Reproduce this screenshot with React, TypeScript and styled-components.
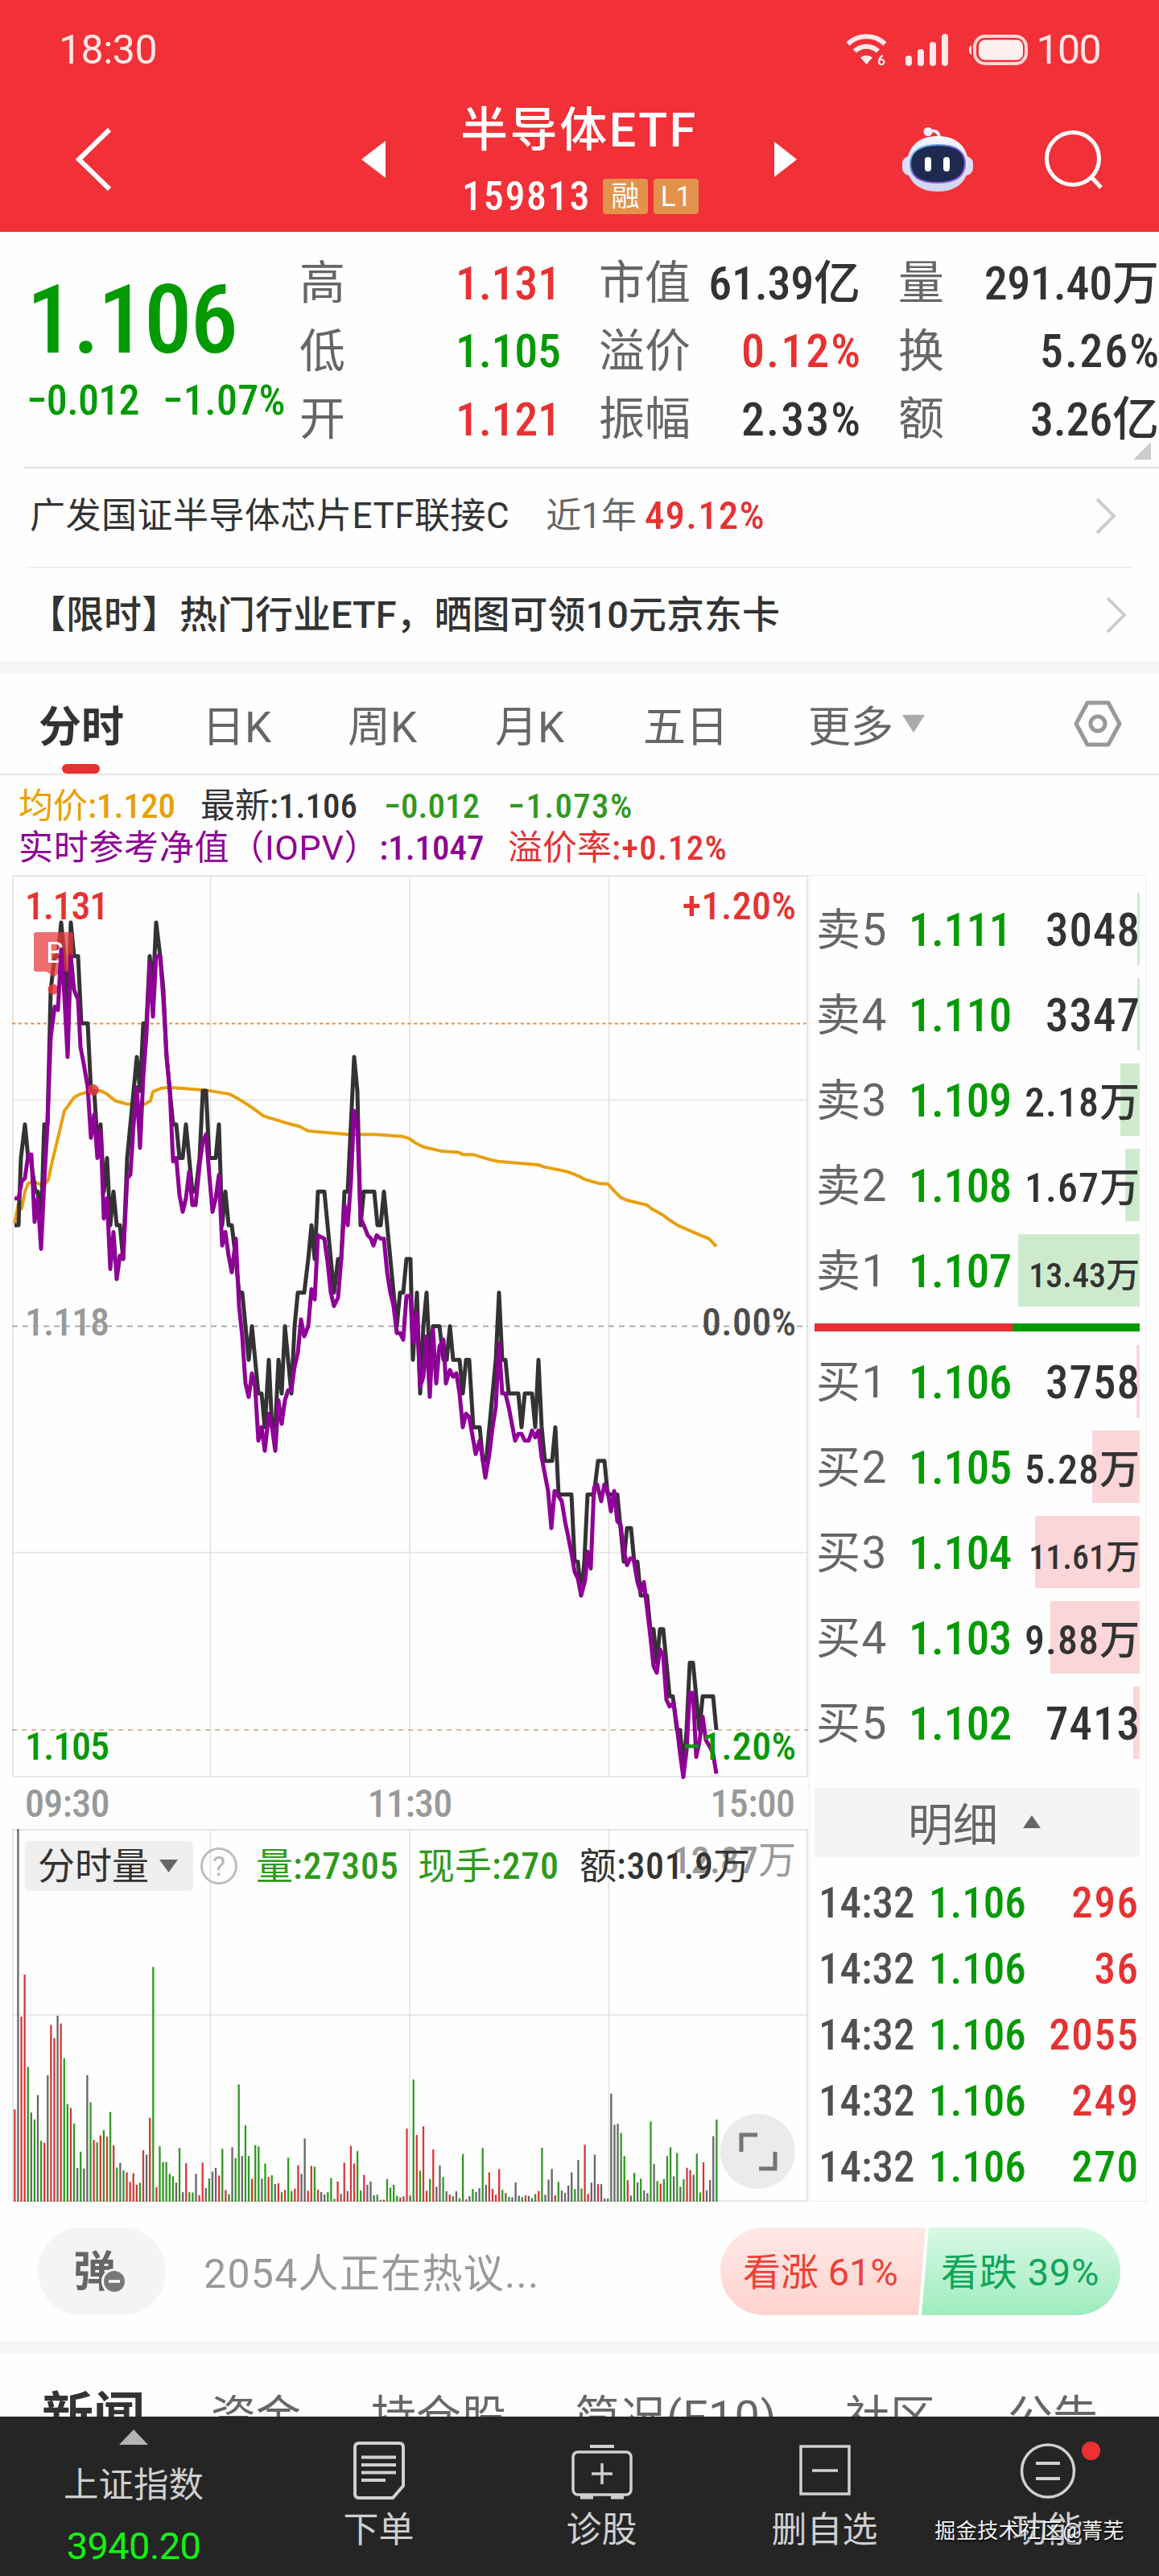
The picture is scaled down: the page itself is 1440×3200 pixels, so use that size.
import React from 'react';
import styled, { createGlobalStyle, css } from 'styled-components';

const RED = '#e63232';
const GREEN = '#039a03';
const INK = '#333333';
const MUTED = '#666666';
const LINE = '#e6e6e6';

const GlobalStyle = createGlobalStyle`
  * { box-sizing: border-box; }
  body {
    margin: 0;
    background: #ffffff;
    font-family: Roboto, "Noto Sans CJK SC", sans-serif;
    color: ${INK};
  }
`;

const Page = styled.main`
  width: 1440px;
  height: 3200px;
  overflow: hidden;
  background: #fefefe;
  display: flex;
  flex-direction: column;
`;

/* Condensed numerals used for every price and volume */
const Num = styled.span<{ $size: number; $color?: string; $track?: number }>`
  font-size: ${p => p.$size}px;
  font-weight: 500;
  font-stretch: 75%;
  color: ${p => p.$color ?? 'inherit'};
  letter-spacing: ${p => p.$track ?? 0}px;
  margin-right: ${p => -(p.$track ?? 0)}px;
  white-space: nowrap;
`;

/* ---------- header ---------- */
const Header = styled.header`
  flex: none;
  height: 288px;
  background: #f13037;
  color: #fff;
`;
const StatusBar = styled.div`
  height: 124px;
  padding: 0 73px 0 73px;
  display: flex;
  align-items: center;
  justify-content: space-between;
  font-size: 50px;
  letter-spacing: -0.5px;
  color: #ffe9e9;
`;
const StatusIcons = styled.div`
  display: flex;
  align-items: center;
  svg { display: block; }
`;
const StatusLevel = styled.span`
  margin-left: 9px;
  font-size: 50px;
  letter-spacing: -1.6px;
`;
const NavBar = styled.nav`
  height: 148px;
  display: flex;
  align-items: center;
  padding-left: 93px;
  svg { display: block; flex: none; }
`;
const Gap = styled.div<{ $w: number }>`
  flex: none;
  width: ${p => p.$w}px;
`;
const TitleBlock = styled.div`
  width: 296px;
  height: 148px;
  display: flex;
  flex-direction: column;
  flex: none;
`;
const Title = styled.h1`
  margin: 2px 0 0 -2px;
  font-size: 59px;
  font-weight: 500;
  line-height: 72px;
  letter-spacing: 2.6px;
  white-space: nowrap;
`;
const CodeRow = styled.div`
  margin-top: 24px;
  height: 44px;
  display: flex;
  align-items: center;
  gap: 7px;
`;
const CodeNum = styled.div`
  width: 168px;
  flex: none;
  display: flex;
`;
const Tag = styled.span`
  width: 56px;
  height: 44px;
  flex: none;
  border-radius: 4px;
  background: #e3924b;
  font-size: 35px;
  line-height: 45px;
  text-align: center;
`;

/* ---------- quote ---------- */
const Quote = styled.section`
  position: relative;
  flex: none;
  height: 294px;
  display: flex;
  &::after {
    content: '';
    position: absolute;
    left: 29px;
    right: 0;
    bottom: 0;
    height: 2px;
    background: #dedede;
  }
`;
const LastBlock = styled.div`
  width: 372px;
  flex: none;
  padding: 49px 0 0 33px;
`;
const LastPrice = styled.div`
  display: flex;
  line-height: 122px;
  height: 120px;
`;
const ChangeRow = styled.div`
  margin-top: 16px;
  line-height: 50px;
  display: grid;
  grid-template-columns: 169px auto;
`;
const StatColumn = styled.dl`
  margin: 22px 47px 0 0;
  width: 325px;
  flex: none;
  display: grid;
  grid-template-rows: repeat(3, 84.5px);
  &:last-of-type { margin-right: 0; width: 324px; }
`;
const Stat = styled.div`
  display: flex;
  align-items: center;
  justify-content: space-between;
  dt { font-size: 57px; color: ${MUTED}; line-height: 84px; font-weight: 400; }
  dd { display: flex; margin: 0; line-height: 85px; }
`;
const Corner = styled.i`
  position: absolute;
  right: 10px;
  bottom: 11px;
  border: 11px solid transparent;
  border-right-color: #cccccc;
  border-bottom-color: #cccccc;
`;

const FundRow = styled.section`
  flex: none;
  height: 124px;
  margin: 0 32px;
  padding: 0 21px 4px 5px;
  display: flex;
  align-items: center;
  border-bottom: 2px solid #efefef;
  font-size: 44px;
  letter-spacing: 0.5px;
  line-height: 60px;
  color: ${INK};
  white-space: nowrap;
`;
const FundPeriod = styled.span`
  margin: 0 10px 0 45px;
  letter-spacing: 0;
  color: ${MUTED};
`;
const RowArrow = styled.svg`
  display: block;
  margin-left: auto;
`;
const PromoRow = styled.section`
  flex: none;
  height: 116px;
  padding: 0 40px 0 35px;
  display: flex;
  align-items: center;
  font-size: 47px;
  line-height: 60px;
  font-weight: 500;
  white-space: nowrap;
`;
const Band = styled.div<{ $h: number }>`
  flex: none;
  height: ${p => p.$h}px;
  background: #f5f5f5;
`;

/* ---------- chart tabs ---------- */
const ChartTabs = styled.nav`
  flex: none;
  height: 126px;
  padding-left: 48px;
  border-bottom: 2px solid ${LINE};
  display: grid;
  grid-template-columns: 203px 181px 183px 184px 205px 330px 60px;
  align-items: center;
  svg { display: block; }
`;
const ChartTab = styled.div<{ $active?: boolean }>`
  position: relative;
  display: flex;
  align-items: center;
  gap: 11px;
  height: 124px;
  font-size: 53px;
  color: ${MUTED};
  white-space: nowrap;
  ${p => p.$active && css`
    color: ${INK};
    font-weight: 700;
    &::after {
      content: '';
      position: absolute;
      left: 29px;
      bottom: 0;
      width: 47px;
      height: 12px;
      border-radius: 6px;
      background: #e83030;
    }
  `}
`;

const InfoGrid = styled.section`
  flex: none;
  height: 124px;
  padding: 12px 0 0 23px;
  display: grid;
  grid-template-columns: 226px 228px 154px auto;
  grid-template-rows: 52px 52px;
  line-height: 52px;
`;
const InfoCell = styled.div<{ $span?: number; $color: string }>`
  grid-column: span ${p => p.$span ?? 1};
  color: ${p => p.$color};
  font-size: 43px;
  white-space: nowrap;
`;
const Iopv = styled.span`
  letter-spacing: 0.7px;
`;

/* ---------- market panels ---------- */
const Market = styled.section`
  flex: none;
  height: 1648px;
  padding-left: 15px;
  display: flex;
`;
const ChartColumn = styled.div`
  width: 990px;
  flex: none;
`;
const PriceChart = styled.div`
  position: relative;
  height: 1121px;
  svg { display: block; overflow: visible; }
`;
const ChartLabel = styled(Num)<{ $top: number; $side: 'left' | 'right' }>`
  position: absolute;
  top: ${p => p.$top}px;
  ${p => p.$side}: 16px;
  line-height: 50px;
`;
const TimeAxis = styled.div`
  height: 64px;
  padding: 2px 17px 0 16px;
  display: flex;
  align-items: center;
  justify-content: space-between;
  line-height: 62px;
`;
const VolumeChart = styled.div`
  position: relative;
  height: 463px;
  > svg { display: block; }
`;
const VolumeBar = styled.div`
  position: absolute;
  left: 16px;
  top: 14px;
  height: 64px;
  display: flex;
  align-items: center;
  white-space: nowrap;
  line-height: 66px;
  svg { display: block; }
`;
const VolumePicker = styled.div`
  width: 209px;
  height: 62px;
  padding-left: 16px;
  border-radius: 6px;
  background: #efefef;
  display: flex;
  align-items: center;
  gap: 13px;
  font-size: 46px;
  line-height: 64px;
`;
const HelpDot = styled.span`
  width: 46px;
  height: 46px;
  margin: 0 23px 0 9px;
  border: 3px solid #bdbdbd;
  border-radius: 50%;
  font-size: 34px;
  line-height: 41px;
  text-align: center;
  color: #b5b5b5;
`;
const VolumeStat = styled.span<{ $w: number; $color: string }>`
  width: ${p => p.$w}px;
  font-size: 46px;
  color: ${p => p.$color};
`;
const VolumeMax = styled.div`
  position: absolute;
  right: 16px;
  top: 11px;
  line-height: 56px;
  font-size: 47px;
  color: #999;
`;
const ExpandButton = styled.button`
  position: absolute;
  left: 880px;
  top: 354px;
  width: 93px;
  height: 93px;
  padding: 0;
  border: 0;
  border-radius: 50%;
  background: #ebebeb;
  display: grid;
  place-items: center;
`;

const BookPanel = styled.aside`
  width: 419px;
  height: 1648px;
  border: 1px solid #ebebeb;
  padding: 21px 7px 0 6px;
`;
const Levels = styled.div`
  display: grid;
  gap: 16px;
`;
const Level = styled.div`
  position: relative;
  height: 90px;
  display: grid;
  grid-template-columns: 115px 130px 1fr;
  grid-template-rows: 90px;
  align-items: start;
  padding: 0 0 0 2px;
  line-height: 94px;
  white-space: nowrap;
`;
const DepthBar = styled.i<{ $side: 'sell' | 'buy' }>`
  position: absolute;
  right: 0;
  top: 0;
  height: 90px;
  background: ${p => (p.$side === 'sell' ? '#cdeacd' : '#fbd5d7')};
`;
const LevelName = styled.span`
  position: relative;
  font-size: 55px;
  line-height: 92px;
  letter-spacing: 1.5px;
  color: ${MUTED};
  font-weight: 400;
`;
const LevelPrice = styled.span`
  position: relative;
  display: flex;
`;
const LevelSize = styled.span<{ $drop: number }>`
  position: relative;
  display: flex;
  justify-self: end;
  padding-top: ${p => p.$drop}px;
`;
const Balance = styled.div`
  height: 10px;
  margin: 21px 0 17px;
  background: linear-gradient(90deg, #e83034 61%, ${GREEN} 61%);
`;
const DetailHead = styled.div`
  height: 86px;
  margin: 36px 0 16px;
  background: #f4f4f4;
  display: flex;
  align-items: center;
  justify-content: center;
  gap: 31px;
  padding: 0 7px 3px 0;
  font-size: 56px;
  color: ${MUTED};
`;
const Tick = styled.div`
  height: 82px;
  display: grid;
  grid-template-columns: 137px 120px 1fr;
  padding: 0 2px 0 5px;
  line-height: 83px;
  > :last-child { justify-self: end; }
`;

/* ---------- discussion ---------- */
const Discuss = styled.section`
  flex: none;
  height: 173px;
  padding: 0 48px 0 47px;
  display: flex;
  align-items: center;
`;
const DanmuPill = styled.div`
  width: 159px;
  height: 109px;
  border-radius: 55px;
  background: #f4f4f4;
  display: flex;
  align-items: center;
  justify-content: center;
  padding: 0 18px 8px 0;
  font-size: 53px;
  font-weight: 700;
  color: ${MUTED};
  position: relative;
  svg { position: absolute; left: 79px; top: 51px; }
`;
const TalkCount = styled.div`
  margin: 0 0 3px 47px;
  font-size: 50px;
  letter-spacing: 1.3px;
  color: #999999;
`;
const Votes = styled.div`
  margin-left: auto;
  width: 497px;
  height: 109px;
  display: flex;
  border-radius: 55px;
  overflow: hidden;
  font-size: 47px;
  line-height: 111px;
  white-space: nowrap;
`;
const VoteUp = styled.div`
  width: 255px;
  padding-left: 28px;
  color: #ee4036;
  background: linear-gradient(#fee9e7, #ffd3ce);
  clip-path: polygon(0 0, 100% 0, 246px 100%, 0 100%);
`;
const VoteDown = styled.div`
  width: 250px;
  margin-left: -8px;
  padding-left: 27px;
  letter-spacing: 0.7px;
  color: #10a658;
  background: linear-gradient(#d8f9e6, #9eecbd);
  clip-path: polygon(12px 0, 100% 0, 100% 100%, 3px 100%);
`;

const NewsTabs = styled.nav`
  flex: none;
  height: 78px;
  overflow: hidden;
  padding-left: 52px;
  display: grid;
  grid-template-columns: 210px 199px 253px 336px 202px auto;
  font-size: 56px;
  line-height: 158px;
  color: ${MUTED};
  white-space: nowrap;
`;
const NewsTab = styled.span<{ $active?: boolean; $track?: number }>`
  letter-spacing: ${p => p.$track ?? 0}px;
  ${p => p.$active && css`
    font-size: 64px;
    font-weight: 700;
    color: ${INK};
  `}
`;

/* ---------- bottom bar ---------- */
const BottomBar = styled.footer`
  position: relative;
  flex: none;
  height: 198px;
  background: #252525;
  display: grid;
  grid-template-columns: 332px repeat(4, 277px);
  color: #cfcfcf;
`;
const IndexCell = styled.div`
  display: flex;
  flex-direction: column;
  align-items: center;
  padding-top: 16px;
  font-size: 43.5px;
  svg { display: block; }
`;
const IndexName = styled.span`
  margin-top: 21px;
  line-height: 60px;
`;
const IndexValue = styled.span`
  margin-top: 15px;
  line-height: 60px;
  font-size: 47px;
  letter-spacing: -0.6px;
  color: #12f312;
`;
const Action = styled.div`
  position: relative;
  display: flex;
  flex-direction: column;
  align-items: center;
  padding-top: 26px;
  font-size: 44px;
  svg { display: block; }
`;
const ActionName = styled.span`
  margin-top: 1px;
  line-height: 60px;
`;
const Dot = styled.i`
  position: absolute;
  left: 181px;
  top: 31px;
  width: 23px;
  height: 23px;
  border-radius: 50%;
  background: #ee3030;
`;
const Credit = styled.div`
  position: absolute;
  right: 43px;
  bottom: 39px;
  font-size: 26px;
  letter-spacing: 0.5px;
  line-height: 34px;
  color: #f2f2f2;
  text-shadow: 1px 2px 2px rgba(0, 0, 0, 0.75);
  white-space: nowrap;
`;

/* ---------- data ---------- */
const stats: [string, string, string][][] = [
  [['高', '1.131', RED], ['低', '1.105', GREEN], ['开', '1.121', RED]],
  [['市值', '61.39亿', INK], ['溢价', '0.12%', RED], ['振幅', '2.33%', INK]],
  [['量', '291.40万', INK], ['换', '5.26%', INK], ['额', '3.26亿', INK]],
];

type Order = { name: string; price: string; size: string; bar: number; font?: number };
const sells: Order[] = [
  { name: '卖5', price: '1.111', size: '3048', bar: 3 },
  { name: '卖4', price: '1.110', size: '3347', bar: 3 },
  { name: '卖3', price: '1.109', size: '2.18万', bar: 24, font: 50 },
  { name: '卖2', price: '1.108', size: '1.67万', bar: 18, font: 50 },
  { name: '卖1', price: '1.107', size: '13.43万', bar: 151, font: 42 },
];
const buys: Order[] = [
  { name: '买1', price: '1.106', size: '3758', bar: 4 },
  { name: '买2', price: '1.105', size: '5.28万', bar: 59, font: 50 },
  { name: '买3', price: '1.104', size: '11.61万', bar: 130, font: 42 },
  { name: '买4', price: '1.103', size: '9.88万', bar: 111, font: 50 },
  { name: '买5', price: '1.102', size: '7413', bar: 8 },
];
const ticks: [string, string][] = [
  ['296', RED], ['36', RED], ['2055', RED], ['249', RED], ['270', GREEN],
];

/* Each point is "x,steps", where one step is 0.001 away from the previous close */
const last = `18,3 23,3 26,5 31,6 35,5 38,5 44,4 47,4 51,3 55,6 59,6 63,10 68,11 72,11 76,12 80,11 84,9 88,12 92,11 97,11 101,9 109,9 113,7 117,7 121,5.5 125,6 129,4 133,5 137,3 141,4 145,3 149,3 153,2 158,5 166,7 170,8 174,7 178,9 182,9 186,11 190,10 194,12 199,11 203,10 207,8 211,7 215,6 219,6 223,5 227,5 231,6 235,5 239,4 243,4 248,5 252,7 256,7 260,5 268,5 272,6 276,3 280,4 284,3 288,3 293,2 297,1 301,1 305,0 309,-1 313,0 317,-1 321,-2 325,-2 329,-3 334,-1 338,-3 342,-3 346,-1 350,-2 354,0 358,-1 362,-2 366,0 370,1 378,1 383,2 387,3 391,2 395,4 403,4 407,3 411,2 415,1 420,2 424,2 428,4 432,4 436,6 440,8 444,7 448,3 452,4 465,4 469,3 473,3 477,4 481,3 485,2 489,1 493,0 497,1 501,1 505,2 510,2 513,-1 518,1 522,-2 526,0 530,1 534,-1 538,0 546,0 551,-1 555,-1 559,0 563,-1 571,-1 575,-2 579,-1 583,-1 588,-3 596,-3 600,-4 604,-4 608,-3 612,-2 616,-1 620,1 624,-1 628,-1 632,-2 644,-2 648,-3 652,-2 661,-2 665,-3 669,-1 673,-3 677,-4 686,-4 690,-3 694,-5 710,-5 714,-7 718,-7 722,-8 726,-7 730,-5 738,-5 743,-4 751,-4 755,-5 767,-5 771,-6 775,-7 779,-6 784,-6 788,-7 792,-7 796,-8 804,-8 808,-9 812,-9 816,-10 820,-9 824,-9 828,-10 832,-11 836,-11 841,-12 845,-12 849,-13.2 853,-12 857,-10 861,-10 865,-11 869,-12 873,-11 886,-11 890,-12`;
const iopv = `18,3.8 23,3.8 27,4.3 31,4.4 35,5.1 39,5.1 43,3.1 47,3.8 51,2.3 55,4.3 59,6 63,8.6 68,9.5 72,9.4 76,11.2 80,9.8 84,8 88,11 92,10 97,9.7 100,8.3 104,7.8 109,7.1 113,5.6 117,6.3 121,5 125,5.8 129,3.2 133,3.8 137,1.7 141,2.8 145,1.4 149,2.1 153,2 158,4.4 162,4.5 166,6 170,7.1 174,5.3 178,7.4 182,8.7 186,10.8 190,9.2 194,11 199,11 203,9.7 207,8 211,7 215,4.9 219,5 223,3.9 227,3.4 231,3.8 235,4.6 239,3.6 243,3.6 248,4.8 252,5.5 256,5.7 260,4.5 264,3.4 268,3.8 272,4.5 276,2.4 280,2.8 284,2.1 288,1.6 293,2.6 297,.6 301,-.3 305,-1.7 309,-2.1 313,-1.4 317,-1.8 321,-3.4 325,-3 329,-3.7 334,-2.6 338,-3 342,-3.7 346,-2.2 350,-2.9 354,-2.2 358,-1.9 362,-1.9 366,-1.2 370,-.8 374,.2 378,-.3 383,0 387,1.1 391,.8 395,2.7 403,2.6 407,1.9 411,1 415,.6 420,.85 424,2 428,3.6 432,3 436,4.3 440,6.4 444,6 448,3.2 452,3 457,2.7 461,2.6 464,2.4 468,2.7 473,2.6 477,2.6 481,1.6 485,1 489,.6 493,-.2 497,-.2 501,-.4 505,.9 510,.9 513,-.5 518,.4 522,-1.8 526,-1.5 530,-.3 534,-2.1 538,-.1 542,-1.7 546,-.6 551,-.4 554,-1.7 559,-1.3 563,-1.5 567,-1.4 571,-2 575,-3 579,-2.6 583,-2.7 591,-3.8 596,-3.4 600,-4 603,-4.5 608,-3.8 612,-3 616,-2.4 620,-.5 624,-2 628,-2 632,-2.4 636,-2.9 640,-3.4 644,-3.2 648,-3.2 652,-3.4 657,-3.4 661,-3.1 665,-3.3 669,-3.1 673,-3.9 677,-4.4 681,-4.9 685,-6 689,-4.9 694,-5.05 698,-5.2 702,-5.8 706,-6.25 710,-6.75 714,-7.3 718,-7.5 722,-8 727,-7.55 730,-6.7 734,-7.2 738,-4.8 742,-4.7 747,-5.2 751,-4.7 755,-4.9 759,-5.5 763,-4.9 767,-5.8 771,-5.9 775,-6.65 779,-7.1 783,-6.9 787,-6.9 792,-7.6 796,-7.9 800,-7.6 804,-8.4 808,-9.2 812,-10.1 816,-10.3 820,-9.6 824,-9.8 828,-11.1 832,-11.3 837,-11.2 841,-11.9 845,-12.7 849,-13.4 853,-12.6 857,-10.9 861,-10.9 865,-12.8 869,-12.35 873,-11.6 877,-12.3 882,-12.5 886,-12.7 890,-13.3`;
const average = `18,3.05 23,3.65 27,3.5 31,4 35,4.25 42,4.3 51,4.2 55,4.2 60,4.35 63,4.7 72,5.6 76,6 80,6.4 92,6.8 100,6.9 115,7 125,7 133,6.9 143,6.7 158,6.6 167,6.6 180,6.6 187,6.7 190,6.97 200,7.07 210,7.1 233,7.06 260,7 285,6.9 293,6.8 300,6.7 313,6.5 328,6.24 353,6.06 372,5.94 383,5.8 407,5.75 433,5.7 467,5.7 500,5.64 509,5.57 516,5.45 526,5.33 549,5.2 570,5.17 575,5.1 588,5.1 609,4.95 619,4.9 669,4.8 675,4.74 704,4.6 721,4.44 726,4.37 745,4.24 755,4.23 764,4 771,3.83 778,3.75 804,3.6 809,3.5 824,3.3 831,3.17 842,3 866,2.75 881,2.6 890,2.37`;

const toLine = (series: string) =>
  series
    .split(' ')
    .map(pair => {
      const [x, steps] = pair.split(',').map(Number);
      return `${x - 15},${(560.5 - steps * 41.8).toFixed(1)}`;
    })
    .join(' ');

/* One bar a minute: direction, then the traded volume on a 1297-unit scale */
const volume = `R321 K1297 R644 R790 G469 K310 G286 K371 G212 R205 K440 R615 R569 K647 R620 G499 G339 R326 G272 K117 G174 K115 K440 G346 R215 G207 R231 G249 R226 G312 R196 G119 K135 G109 R102 R69 R99 R59 G66 R179 K164 R292 G817 R50 G193 G138 G138 G97 G88 K66 G187 K33 R134 G33 G32 K97 R22 R136 K47 G81 K105 K118 R91 G184 R41 G26 K189 G152 G408 K159 G266 G159 R80 G197 G192 K80 G133 R86 G92 K61 R64 G33 R41 G153 G37 R45 R127 K97 K220 R38 R125 G122 R41 K34 K25 G33 G82 G10 R70 K27 R136 K37 R194 R133 G176 G39 R93 K59 K70 K22 G24 K6 R7 G79 G49 G59 G20 R15 K19 R254 K21 G425 R232 G108 R262 R38 G79 R182 K52 K126 G86 K36 R25 G19 K36 K12 G166 R8 K19 G44 K34 K47 G187 K59 R102 R44 R24 R113 G41 K30 G17 K15 K67 K21 G16 R22 K20 K12 G27 R37 G188 K24 K77 K114 R22 G69 K39 K30 K56 K102 G44 K145 G46 R198 R27 K66 K164 R61 K61 K11 G11 K376 K268 K271 G239 G159 R75 K21 G100 K67 G80 K39 K30 G279 K131 G72 R63 G79 G159 G189 K88 G169 K52 G78 R118 R110 K94 G167 G32 R137 K40 K75 K228 G286`
  .split(' ')
  .map(v => ({ tone: v[0], units: Number(v.slice(1)) }));
const tones: Record<string, string> = { R: '#d93636', G: '#2f9a20', K: '#666666' };

/* ---------- small drawings ---------- */
const Wifi = () => (
  <svg width="52" height="40" viewBox="0 0 52 40" fill="none" stroke="#ffe9e9" strokeWidth="6">
    <path d="M2.500 12.500a33 33 0 0 1 46 0" />
    <path d="M11 21.500a21 21 0 0 1 29 0" />
    <path d="M18 29.500a11.500 11.500 0 0 1 15 0L25.500 38Z" fill="#ffe9e9" stroke="none" />
    <path d="M46 27c-4 2-5 5-5 8a3.200 3.200 0 1 0 3.200-3.200c-1.800 0-3 1.200-3.200 2.700" strokeWidth="2.200" />
  </svg>
);
const SignalIcon = styled.svg`
  margin-left: 22px;
`;
const Signal = () => (
  <SignalIcon width="54" height="40" viewBox="0 0 54 40" fill="#ffe9e9">
    <rect x="0" y="27" width="8" height="13" rx="4" />
    <rect x="15" y="19" width="8" height="21" rx="4" />
    <rect x="30" y="10" width="8" height="30" rx="4" />
    <rect x="45" y="0" width="8" height="40" rx="4" />
  </SignalIcon>
);
const BatteryIcon = styled.svg`
  margin-left: 25px;
`;
const Battery = () => (
  <BatteryIcon width="74" height="38" viewBox="0 0 74 38">
    <path d="M3 13a7 7 0 0 0 0 12Z" fill="#ffe9e9" />
    <rect x="7" y="2" width="64" height="34" rx="13" fill="none" stroke="#ffd5d5" strokeWidth="4" />
    <rect x="12" y="6.500" width="55" height="25" rx="8" fill="#fff0f0" />
  </BatteryIcon>
);
const Robot = () => (
  <svg width="90" height="82" viewBox="0 0 90 82">
    <defs>
      <linearGradient id="shell" x1="0" y1="0" x2="0" y2="1">
        <stop offset="0" stopColor="#f6f6ff" />
        <stop offset="1" stopColor="#cfd3f2" />
      </linearGradient>
      <linearGradient id="rim" x1="0" y1="0" x2="1" y2="1">
        <stop offset="0" stopColor="#62e0ee" />
        <stop offset=".5" stopColor="#6c4ce0" />
        <stop offset="1" stopColor="#a26bf0" />
      </linearGradient>
    </defs>
    <path d="M34 6c8-2 13 1 13 9" fill="none" stroke="#e6e6fa" strokeWidth="4" />
    <circle cx="33" cy="6.500" r="5.500" fill="#ececfc" />
    <rect x="1" y="37" width="88" height="24" rx="9" fill="#dcdcf6" />
    <path d="M45 12c26 0 38 16 38 35 0 21-14 34-38 34S7 68 7 47c0-19 12-35 38-35Z" fill="url(#shell)" />
    <path d="M45 23c23 0 34 9 34 23 0 16-11 24-34 24S11 62 11 46c0-14 11-23 34-23Z" fill="#1f2a50" stroke="url(#rim)" strokeWidth="2" />
    <rect x="29" y="38" width="8" height="18" rx="4" fill="#fff" />
    <rect x="52" y="38" width="8" height="18" rx="4" fill="#fff" />
  </svg>
);
const Chevron = () => (
  <RowArrow width="26" height="44" viewBox="0 0 26 44" fill="none" stroke="#cccccc" strokeWidth="4">
    <path d="M2 1l21 21L2 43" />
  </RowArrow>
);

const OrderRow = ({ order, side }: { order: Order; side: 'sell' | 'buy' }) => {
  const font = order.font ?? 57;
  return (
    <Level>
      <DepthBar $side={side} style={{ width: order.bar }} />
      <LevelName>{order.name}</LevelName>
      <LevelPrice><Num $size={57} $track={-0.4} $color={GREEN}>{order.price}</Num></LevelPrice>
      <LevelSize $drop={(57 - font) * 0.34}>
        <Num $size={font} $track={font === 42 ? 0 : 1}>{order.size}</Num>
      </LevelSize>
    </Level>
  );
};

export default function App() {
  return (
    <Page>
      <GlobalStyle />
      <Header>
        <StatusBar>
          <span>18:30</span>
          <StatusIcons>
            <Wifi />
            <Signal />
            <Battery />
            <StatusLevel>100</StatusLevel>
          </StatusIcons>
        </StatusBar>
        <NavBar>
          <svg width="46" height="78" viewBox="0 0 46 78" fill="none" stroke="#fff" strokeWidth="6">
            <path d="M43 2L5 39l38 37" />
          </svg>
          <Gap $w={310} />
          <svg width="30" height="46" viewBox="0 0 30 46"><path d="M30 0v46L0 23Z" fill="#fff" /></svg>
          <Gap $w={95} />
          <TitleBlock>
            <Title>半导体ETF</Title>
            <CodeRow>
              <CodeNum><Num $size={50} $track={1.7}>159813</Num></CodeNum>
              <Tag>融</Tag>
              <Tag>L1</Tag>
            </CodeRow>
          </TitleBlock>
          <Gap $w={92} />
          <svg width="28" height="44" viewBox="0 0 28 44"><path d="M0 0v44l28-22Z" fill="#fff" /></svg>
          <Gap $w={130} />
          <Robot />
          <Gap $w={87} />
          <svg width="76" height="76" viewBox="0 0 76 76" fill="none" stroke="#fff" strokeWidth="5">
            <circle cx="36" cy="37" r="32.500" />
            <path d="M59 60l12 13" />
          </svg>
        </NavBar>
      </Header>

      <Quote>
        <LastBlock>
          <LastPrice><Num $size={119} $track={-2} $color={GREEN}>1.106</Num></LastPrice>
          <ChangeRow>
            <Num $size={52} $track={-0.7} $color={GREEN}>−0.012</Num>
            <Num $size={52} $track={0.3} $color={GREEN}>−1.07%</Num>
          </ChangeRow>
        </LastBlock>
        {stats.map((column, i) => (
          <StatColumn key={i}>
            {column.map(([name, value, color]) => (
              <Stat key={name}>
                <dt>{name}</dt>
                <dd><Num $size={58} $track={value.endsWith('%') ? 2 : -0.3} $color={color}>{value}</Num></dd>
              </Stat>
            ))}
          </StatColumn>
        ))}
        <Corner />
      </Quote>

      <FundRow>
        <span>广发国证半导体芯片ETF联接C</span>
        <FundPeriod>近1年</FundPeriod>
        <Num $size={49} $track={1.2} $color={RED}>49.12%</Num>
        <Chevron />
      </FundRow>
      <PromoRow>
        <span>【限时】热门行业ETF，晒图可领10元京东卡</span>
        <Chevron />
      </PromoRow>
      <Band $h={15} />

      <ChartTabs>
        <ChartTab $active>分时</ChartTab>
        <ChartTab>日K</ChartTab>
        <ChartTab>周K</ChartTab>
        <ChartTab>月K</ChartTab>
        <ChartTab>五日</ChartTab>
        <ChartTab>
          更多
          <svg width="28" height="22" viewBox="0 0 28 22"><path d="M0 0h28L14 22Z" fill="#aaaaaa" /></svg>
        </ChartTab>
        <svg width="60" height="58" viewBox="0 0 60 58" fill="none" stroke="#999999" strokeWidth="5">
          <path d="M17 3h26l14 26-14 26H17L3 29Z" strokeLinejoin="round" />
          <circle cx="30" cy="29" r="9" />
        </svg>
      </ChartTabs>

      <InfoGrid>
        <InfoCell $color="#e8a000">均价<Num $size={43}>:1.120</Num></InfoCell>
        <InfoCell $color={INK}>最新<Num $size={43}>:1.106</Num></InfoCell>
        <InfoCell $color="#33991f"><Num $size={43}>−0.012</Num></InfoCell>
        <InfoCell $color="#33991f"><Num $size={43} $track={1.3}>−1.073%</Num></InfoCell>
        <InfoCell $color="#8f0096" $span={3}><Iopv>实时参考净值（IOPV）</Iopv><Num $size={43}>:1.1047</Num></InfoCell>
        <InfoCell $color={RED}>溢价率<Num $size={43} $track={1.2}>:+0.12%</Num></InfoCell>
      </InfoGrid>

      <Market>
        <ChartColumn>
          <PriceChart>
            <svg width="989" height="1121" viewBox="0 0 989 1121" fill="none" strokeLinejoin="round">
              <path d="M1 1H988V1120H1Z" stroke={LINE} strokeWidth="2" />
              <path d="M246.500 0V1121M494 0V1121M741.500 0V1121M0 279.500H989M0 841.500H989" stroke="#e2e2e2" strokeWidth="1.500" />
              <path d="M0 184.500H989" stroke="#ee8a3c" strokeWidth="2" strokeDasharray="4 3.800" />
              <path d="M0 560.500H989" stroke="#aaaaaa" strokeWidth="2" strokeDasharray="7 6" />
              <path d="M0 1062H989" stroke="#c3a878" strokeWidth="1.600" strokeDasharray="6 6" />
              <polyline points={toLine(average)} stroke="#e8a010" strokeWidth="4" />
              <polyline points={toLine(last)} stroke="#333333" strokeWidth="5" />
              <path d="M30 71H73a3 3 0 0 1 3 3V117a3 3 0 0 1-3 3H60L52 127 43 120H30a3 3 0 0 1-3-3V74a3 3 0 0 1 3-3Z" fill="#e83a3a" fillOpacity=".74" />
              <text x="42" y="109" fontSize="37" fill="#fff" fontFamily="Roboto">B</text>
              <circle cx="51" cy="142" r="6.500" fill="#e83a3a" fillOpacity=".85" />
              <polyline points={toLine(iopv)} stroke="#8f0096" strokeWidth="5" />
              <circle cx="101" cy="267" r="7" fill="#e83a3a" fillOpacity=".85" />
            </svg>
            <ChartLabel $size={48} $track={-1.3} $top={14} $side="left" $color={RED}>1.131</ChartLabel>
            <ChartLabel $size={48} $track={0.4} $top={14} $side="right" $color={RED}>+1.20%</ChartLabel>
            <ChartLabel $size={48} $track={-1.1} $top={531} $side="left" $color="#999">1.118</ChartLabel>
            <ChartLabel $size={48} $track={0.3} $top={531} $side="right" $color="#4c4c4c">0.00%</ChartLabel>
            <ChartLabel $size={48} $track={-1.1} $top={1058} $side="left" $color={GREEN}>1.105</ChartLabel>
            <ChartLabel $size={48} $track={0.3} $top={1058} $side="right" $color={GREEN}>−1.20%</ChartLabel>
          </PriceChart>
          <TimeAxis>
            <Num $size={48} $track={-0.7} $color="#999">09:30</Num>
            <Num $size={48} $track={-0.7} $color="#999">11:30</Num>
            <Num $size={48} $track={-0.7} $color="#999">15:00</Num>
          </TimeAxis>
          <VolumeChart>
            <svg width="989" height="463" viewBox="0 0 989 463" fill="none">
              <path d="M1 1H988V462H1Z" stroke={LINE} strokeWidth="2" />
              <path d="M246.500 0V462M494 0V462M741.500 0V462M0 231H989" stroke="#e2e2e2" strokeWidth="1.500" />
              {volume.map(({ tone, units }, i) => {
                const height = units * 0.357;
                return <rect key={i} x={2.2 + i * 4.094} y={463 - height} width="2.300" height={height} fill={tones[tone]} />;
              })}
            </svg>
            <VolumeMax><Num $size={47}>12.87</Num>万</VolumeMax>
            <VolumeBar>
              <VolumePicker>
                分时量
                <svg width="23" height="16" viewBox="0 0 23 16"><path d="M0 0h23L11.500 16Z" fill="#666" /></svg>
              </VolumePicker>
              <HelpDot>?</HelpDot>
              <VolumeStat $w={201} $color="#2f9a1c">量<Num $size={46} $track={0.8}>:27305</Num></VolumeStat>
              <VolumeStat $w={201} $color="#2f9a1c">现手<Num $size={46} $track={0.8}>:270</Num></VolumeStat>
              <VolumeStat $w={210} $color={INK}>额<Num $size={46} $track={0.7}>:301.9</Num>万</VolumeStat>
            </VolumeBar>
            <ExpandButton aria-label="全屏">
              <svg width="48" height="48" viewBox="0 0 48 48" fill="none" stroke="#757575" strokeWidth="5">
                <path d="M3 24V3H23M45 24V45H25" />
              </svg>
            </ExpandButton>
          </VolumeChart>
        </ChartColumn>

        <BookPanel>
          <Levels>{sells.map(o => <OrderRow key={o.name} order={o} side="sell" />)}</Levels>
          <Balance />
          <Levels>{buys.map(o => <OrderRow key={o.name} order={o} side="buy" />)}</Levels>
          <DetailHead>
            明细
            <svg width="22" height="16" viewBox="0 0 22 16"><path d="M0 16h22L11 0Z" fill="#666" /></svg>
          </DetailHead>
          {ticks.map(([size, color]) => (
            <Tick key={size}>
              <Num $size={53} $color="#505050">14:32</Num>
              <Num $size={53} $color={GREEN}>1.106</Num>
              <Num $size={53} $track={1.6} $color={color}>{size}</Num>
            </Tick>
          ))}
        </BookPanel>
      </Market>

      <Discuss>
        <DanmuPill>
          弹
          <svg width="32" height="32" viewBox="0 0 32 32">
            <circle cx="16" cy="16" r="14.500" fill="#777" stroke="#f4f4f4" strokeWidth="3" />
            <path d="M9 16h14" stroke="#fff" strokeWidth="3.500" />
          </svg>
        </DanmuPill>
        <TalkCount>2054人正在热议...</TalkCount>
        <Votes>
          <VoteUp>看涨 61%</VoteUp>
          <VoteDown>看跌 39%</VoteDown>
        </Votes>
      </Discuss>
      <Band $h={16} />
      <NewsTabs>
        <NewsTab $active>新闻</NewsTab>
        <NewsTab>资金</NewsTab>
        <NewsTab>持仓股</NewsTab>
        <NewsTab $track={1}>简况(F10)</NewsTab>
        <NewsTab>社区</NewsTab>
        <NewsTab>公告</NewsTab>
      </NewsTabs>

      <BottomBar>
        <IndexCell>
          <svg width="36" height="19" viewBox="0 0 36 19"><path d="M0 19h36L18 0Z" fill="#b3b3b3" /></svg>
          <IndexName>上证指数</IndexName>
          <IndexValue>3940.20</IndexValue>
        </IndexCell>
        <Action>
          <svg width="66" height="84" viewBox="0 0 66 84" fill="none" stroke="#d0d0d0" strokeWidth="4">
            <path d="M8 7H58q5 0 5 5V60L50 75H8q-5 0-5-5V12q0-5 5-5Z" />
            <path d="M11 24.500H54M11 34H54M11 43.500H54M11 53H41" />
          </svg>
          <ActionName>下单</ActionName>
        </Action>
        <Action>
          <svg width="76" height="84" viewBox="0 0 76 84" fill="none" stroke="#d0d0d0" strokeWidth="3.500">
            <path d="M23 11H53" strokeWidth="4" />
            <rect x="2" y="18" width="72" height="53" rx="6" />
            <path d="M38 32V58M25 45H51" />
            <path d="M11 74H27M49 74H65" strokeWidth="5" />
          </svg>
          <ActionName>诊股</ActionName>
        </Action>
        <Action>
          <svg width="64" height="84" viewBox="0 0 64 84" fill="none" stroke="#d0d0d0" strokeWidth="3.500">
            <rect x="2" y="11" width="60" height="59" />
            <path d="M16 41H48" />
          </svg>
          <ActionName>删自选</ActionName>
        </Action>
        <Action>
          <svg width="70" height="84" viewBox="0 0 70 84" fill="none" stroke="#d0d0d0" strokeWidth="3.500">
            <circle cx="35" cy="41.500" r="32.500" />
            <path d="M20 32H50M20 51H50" strokeWidth="4" />
          </svg>
          <ActionName>功能</ActionName>
          <Dot />
        </Action>
        <Credit>掘金技术社区@菁芜</Credit>
      </BottomBar>
    </Page>
  );
}
